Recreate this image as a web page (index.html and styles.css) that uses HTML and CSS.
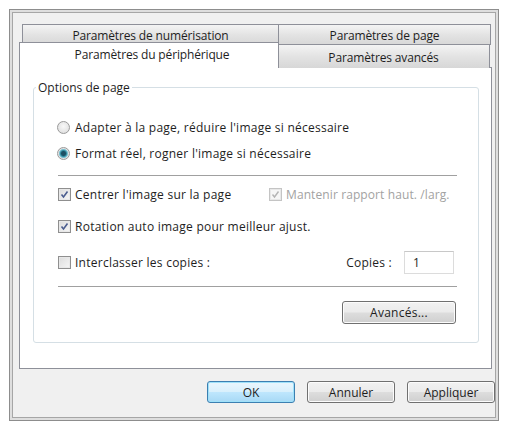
FILE: index.html
```html
<!DOCTYPE html>
<html lang="fr">
<head>
<meta charset="utf-8">
<title>Paramètres du périphérique</title>
<link rel="stylesheet" href="styles.css">
</head>
<body>
<div class="window">
  <div class="dialog">
    <div class="tabs">
      <div class="tab-row back">
        <div class="tab t-left">Paramètres de numérisation</div>
        <div class="tab t-right">Paramètres de page</div>
      </div>
      <div class="tab-row front">
        <div class="tab active">Paramètres du périphérique</div>
        <div class="tab t-right low">Paramètres avancés</div>
      </div>
    </div>
    <div class="panel">
      <fieldset class="group">
        <legend>Options de page</legend>
        <div class="group-body">
          <div class="opt"><span class="radio"></span><span class="lbl">Adapter à la page, réduire l'image si nécessaire</span></div>
          <div class="opt"><span class="radio on"></span><span class="lbl">Format réel, rogner l'image si nécessaire</span></div>
          <div class="sep sep1"></div>
          <div class="opt two">
            <div class="col1"><span class="check"><svg viewBox="0 0 13 13" width="13" height="13"><path d="M3.5 6.5 L5.5 9 L9.5 3.5" fill="none" stroke="#4b5d8f" stroke-width="1.6"/></svg></span><span class="lbl">Centrer l'image sur la page</span></div>
            <div class="col2 disabled"><span class="check dis"><svg viewBox="0 0 13 13" width="13" height="13"><path d="M3.5 6.5 L5.5 9 L9.5 3.5" fill="none" stroke="#b4b4b4" stroke-width="1.4"/></svg></span><span class="lbl">Mantenir rapport haut. /larg.</span></div>
          </div>
          <div class="opt r4"><span class="check"><svg viewBox="0 0 13 13" width="13" height="13"><path d="M3.5 6.5 L5.5 9 L9.5 3.5" fill="none" stroke="#4b5d8f" stroke-width="1.6"/></svg></span><span class="lbl">Rotation auto image pour meilleur ajust.</span></div>
          <div class="opt r5">
            <span class="check"></span><span class="lbl">Interclasser les copies :</span>
            <span class="copies">Copies :</span>
            <span class="input">1</span>
          </div>
          <div class="sep sep2"></div>
          <div class="adv-row"><span class="btn adv">Avancés...</span></div>
        </div>
      </fieldset>
    </div>
    <div class="buttons">
      <span class="btn ok">OK</span>
      <span class="btn">Annuler</span>
      <span class="btn">Appliquer</span>
    </div>
  </div>
</div>
</body>
</html>
```
FILE: styles.css
```css
* { box-sizing: border-box; }
html, body { margin: 0; padding: 0; background: #ffffff; }
body {
  font-family: "Open Sans", "Noto Sans", "Liberation Sans", sans-serif;
  font-size: 12px;
  color: #1e1e1e;
}
.window {
  margin: 9px 0 0 9px;
  width: 490px;
  height: 412px;
  border: 1px solid #8d8d8d;
  background: #dedede;
  padding: 2px;
}
.dialog {
  height: 100%;
  border: 1px solid #a6a6a6;
  background: #f0f0f0;
  padding: 11px 3px 0 6px;
}
.tabs { position: relative; }
.tab-row { display: flex; }
.tab-row.back { padding-left: 3px; height: 20px; }
.tab {
  display: flex;
  align-items: center;
  justify-content: center;
  border: 1px solid #8e9099;
  background: linear-gradient(#f4f4f4, #e3e3e3 50%, #d7d7d7);
  line-height: 1;
  white-space: nowrap;
  letter-spacing: -0.15px;
}
.back .tab { height: 21px; border-bottom: none; padding-top: 1px; }
.t-left { width: 257px; }
.t-right { width: 213px; margin-left: -1px; }
.tab-row.front {
  margin-top: -2px;
  height: 26px;
  margin-bottom: -1px;
  align-items: flex-end;
}
.tab.active {
  position: relative;
  z-index: 2;
  width: 260px;
  height: 26px;
  background: #ffffff;
  border-bottom: none;
  padding-bottom: 1px;
  padding-left: 6px;
}
.tab.low {
  height: 24px;
  width: 212px;
  border-left: none;
  border-bottom: none;
  padding-top: 2px;
}
.panel {
  height: 302px;
  border: 1px solid #8e9099;
  background: #ffffff;
  padding-top: 11px;
  letter-spacing: 0.25px;
}
.group {
  margin: 0 12px 0 13px;
  padding: 0;
  border: 1px solid #d5dfe5;
  border-radius: 3px;
  min-width: 0;
}
.group legend {
  margin-left: 2px;
  padding: 0 2px;
  line-height: 17px;
  height: 17px;
  font-size: 12px;
  letter-spacing: 0;
}
.group-body { padding: 18px 21px 18px 24px; }
.opt {
  height: 26px;
  display: flex;
  align-items: center;
}
.lbl { margin-left: 4px; white-space: nowrap; }
.radio {
  width: 13px;
  height: 13px;
  border-radius: 50%;
  border: 1px solid #9a9a9a;
  background: radial-gradient(circle at 50% 40%, #f8f8f8, #dadada);
  flex: none;
  margin-left: -1px;
  margin-right: 1px;
  position: relative;
}
.radio.on {
  background: radial-gradient(circle, #1d4f63 0 2px, #2f8ba0 3px, #9fd3df 4.5px, #e2e2e2 5px, #f4f4f4);
}
.check {
  width: 13px;
  height: 13px;
  border: 1px solid #8f8f8f;
  background: linear-gradient(135deg, #dcdcdc, #f6f6f6);
  box-shadow: inset 0 0 0 1px #e8e8e8;
  flex: none;
  display: flex;
  align-items: center;
  justify-content: center;
}
.check svg { display: block; margin: -1px; }
.check.dis { border-color: #c4c4c4; background: #f6f6f6; }
.disabled .lbl { color: #a2a2a2; letter-spacing: 0.1px; }
.two { display: flex; }
.col1, .col2 { display: flex; align-items: center; }
.col1 { width: 211px; }
.sep { height: 1px; background: #a0a0a0; }
.sep1 { margin-top: 9px; margin-bottom: 5px; }
.r4 { margin-top: 6px; }
.r5 { margin-top: 10px; }
.copies { margin-left: auto; }
.input {
  margin-left: 12px;
  margin-right: 3px;
  width: 50px;
  height: 23px;
  border: 1px solid #dcdcdc;
  border-top-color: #c8c8c8;
  display: flex;
  align-items: center;
  padding-left: 8px;
  background: #fff;
}
.sep2 { margin-top: 11px; }
.adv-row {
  margin-top: 14px;
  display: flex;
  justify-content: flex-end;
}
.btn {
  display: flex;
  align-items: center;
  justify-content: center;
  height: 23px;
  width: 88px;
  border: 1px solid #707070;
  border-radius: 3px;
  background: linear-gradient(#f2f2f2, #ebebeb 48%, #dddddd 52%, #cfcfcf);
  box-shadow: inset 0 0 0 1px #fcfcfc;
}
.btn.adv { width: 114px; margin-right: 1px; }
.buttons {
  margin-top: 12px;
  display: flex;
  justify-content: flex-end;
  gap: 12px;
  margin-right: -3px;
}
.buttons .btn { height: 22px; }
.btn.ok {
  border-color: #3c7fb1;
  background: linear-gradient(#eaf6fd, #d9f0fc 48%, #bee6fd 52%, #a7d9f5);
  box-shadow: inset 0 0 0 1px #9fe1f9;
}
```
